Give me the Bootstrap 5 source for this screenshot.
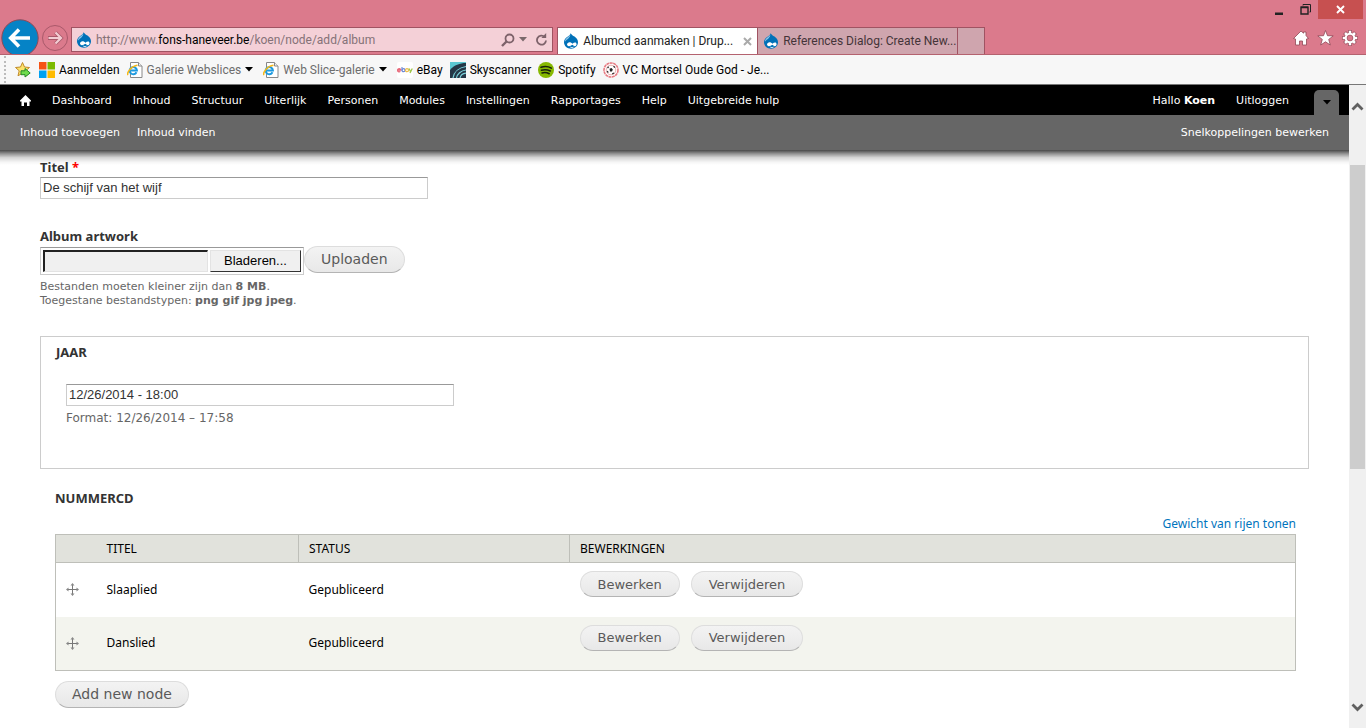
<!DOCTYPE html>
<html lang="nl">
<head>
<meta charset="utf-8">
<meta name="viewport" content="width=device-width, initial-scale=1">
<title>Albumcd aanmaken | Drupal</title>
<link rel="stylesheet" href="https://cdn.jsdelivr.net/npm/bootstrap@5.3.0/dist/css/bootstrap.min.css">
<style>
  body { font: 12px/14px "Noto Sans", "Open Sans", sans-serif; color: #000; background: #fff; }
  svg { display: block; flex-shrink: 0; }
  button { font: inherit; color: inherit; background: none; border: 0; padding: 0; }
  .ui-font { font-family: Roboto, "Open Sans", sans-serif; }

  /* browser frame */
  .frame { background: #db7a8c; border-bottom: 1px solid #b4626f; }
  .title-strip { height: 27px; padding-right: 3px; }
  .title-strip button { height: 19px; width: 26px; display: flex; align-items: center; justify-content: center; }
  .title-strip .close-window { width: 45px; background: #c75050; }
  .nav-row { height: 27px; }
  .address { width: 35.3%; height: 25px; background: #f4d0d7; border: 1px solid #a05362; margin: 0 4px 2px 3px; padding: 0 4px; }
  .url { color: #857278; }
  .url b { color: #000; font-weight: 400; }
  .page-tab { width: 200px; height: 27px; padding: 0 5px; border: 1px solid #a05362; border-bottom: 0; border-left: 0; background: #cfa5ae; color: #443438; }
  .page-tab.current { background: #fff; color: #222; border-left: 1px solid #a05362; width: 201px; }
  .page-tab.blank { width: 27px; }
  .tools { padding-right: 8px; }

  .favorites { height: 30px; background: #f7f7f7; border-bottom: 1px solid #777; padding-left: 4px; }
  .favorites a { color: #000; text-decoration: none; display: flex; align-items: center; gap: 4px; margin-right: 7px; white-space: nowrap; }
  .favorites a.feed { color: #6d6d6d; margin-right: 10px; }
  .grip { height: 27px; border-left: 2px dotted #bbb; }

  /* scrollbar */
  .scroll-rail { width: 17px; background: #f0f0f0; padding: 13px 1px; }
  .scroll-thumb { height: 304px; background: #cdcdcd; margin-top: 50px; }

  /* admin toolbar */
  .admin { font: 11px/20px "DejaVu Sans", Verdana, sans-serif; position: relative; }
  .admin a { color: #fff; text-decoration: none; }
  .menu-bar { background: #000; height: 30px; padding: 1px 10px 0 20px; gap: 21px; }
  .menu-toggle { background: #666; width: 25px; height: 25px; border-radius: 5px 5px 0 0; margin-left: 4px; }
  .shortcut-bar { background: #666; height: 35px; padding: 0 20px; gap: 17px; }
  .admin::after { content: ""; position: absolute; left: 0; right: 0; top: 100%; height: 15px; pointer-events: none;
    background: linear-gradient(#000000b8, #0000006c 25%, #0000002c 50%, #0000000a 80%, #0000); }

  /* form */
  .node-form { padding: 8px 40px 0; }
  .field-title { font-size: 13px; line-height: 18px; font-weight: 700; color: #333; margin: 0 0 1px; display: block; }
  .req { color: #f00; }
  .text-field { display: block; width: 388px; max-width: 100%; height: 22px; padding: 0 2px 1px; border: 1px solid #ccc; border-top-color: #999; color: #333; font: 13px/18px "Liberation Sans", Arial, sans-serif; background: #fff; }
  .hint { color: #666; font-family: "DejaVu Sans", Verdana, sans-serif; font-size: 11px; margin-top: 5px; }
  .hint.wide { font-size: 12px; }
  .file-box { border: 1px solid #ccc; border-top-color: #999; padding: 2px; height: 28px; gap: 2px; margin-top: 1px; font: 13px/18px "Liberation Sans", Arial, sans-serif; }
  .file-box input { width: 165px; height: 22px; background: #f0f0f0; border: 1px solid #e3e3e3; border-top: 2px solid #222; border-left: 2px solid #222; }
  .file-box button { width: 91px; height: 22px; background: #f0f0f0; color: #000; border: 1px solid #e3e3e3; border-right-color: #333; border-bottom-color: #333; }
  .pill { font: 13px/17px "DejaVu Sans", Verdana, sans-serif; color: #5a5a5a; height: 26px; padding: 0 17px; border: 1px solid #ddd; border-bottom-color: #b4b4b4; border-radius: 14px; background: linear-gradient(#f3f3f3, #e8e8e8); }
  .pill-lg { font-size: 14px; height: 27px; padding: 0 16px; }
  .row-actions { gap: 11px; }
  .date-box { border: 1px solid #ccc; padding: 6px 15px 43px; margin-top: 28px; }
  .date-inner { padding: 22px 10px 0; }
  .node-set { padding: 20px 13px 0 15px; }
  .weights-line { margin-top: 10px; }
  .weights { color: #0074bd; text-decoration: none; }
  .nodes { width: 100%; border: 1px solid #bebfb9; table-layout: fixed; border-collapse: collapse; margin: 3px 0 10px; }
  .nodes th { background: #e1e2dc; border-bottom: 1px solid #bebfb9; font-weight: 400; height: 28px; padding: 0 10px; }
  .nodes th + th + th { border-left: 1px solid #bebfb9; }
  .nodes td { height: 54px; padding: 0 10px; vertical-align: middle; }
  .nodes td:last-child { vertical-align: top; padding-top: 8px; }
  .nodes tbody tr:nth-child(even) { background: #f3f4ee; }
  .c-drag { width: 41px; } .c-title { width: 202px; } .c-state { width: 271px; }
</style>
</head>
<body>
<svg width="0" height="0" class="position-absolute" aria-hidden="true">
  <symbol id="drop" viewBox="0 0 16 16">
    <path d="M7.6.3C8.6 2 10 2.700 11.500 3.600 13.600 5 15 7 15 9.300c0 3.700-3.100 6.400-6.900 6.400S1 12.900 1 9.200C1 6.800 2.500 5 4.500 3.700 6 2.800 7.300 2 7.600.3z" fill="#0071b8"/>
    <path d="M7.300 1.600C6.800 3.200 4.600 4 3.200 5.500 2 6.900 2 8 2.200 8.600 4 6.200 7.300 5 7.300 1.600z" fill="#8fc6e8"/>
    <path d="M4.500 10.300c2-1.800 3.600-.6 4.900.4 1.500-1.100 3.700-1.900 4.100.1.400 2-1.300 2.800-2.400 2.200L9.300 11.800c-1.400 1-2.700 1.900-4.100 1.300-1.300-.6-1.500-2-.7-2.800z" fill="#fff"/>
    <path d="M7.300 14.100c1 .6 2.300.6 3.200 0" stroke="#fff" stroke-width=".9" fill="none"/>
  </symbol>
  <symbol id="iepage" viewBox="0 0 16 16">
    <path d="M3.500.5h8l3.500 3.500v11.500H3.500z" fill="#fff" stroke="#888"/><path d="M11.500.5V4H15" fill="#eee" stroke="#888"/>
    <path d="M9.500 10.300A3.600 3.600 0 1 1 9.900 8.400H3.500" fill="none" stroke="#1c9ae0" stroke-width="2"/>
    <path d="M1 13C-.5 11 4 4 10.500 3.300" fill="none" stroke="#f5b818" stroke-width="1.500"/>
  </symbol>
  <symbol id="mover" viewBox="0 0 13 13">
    <path d="M6.500 1v11M1 6.500h11" stroke="#777" stroke-width="1"/>
    <path d="M6.500 0l2 2.500H4.500zM6.500 13l2-2.500H4.500zM0 6.500l2.500-2v4zM13 6.500l-2.500-2v4z" fill="#888"/>
  </symbol>
  <symbol id="caret" viewBox="0 0 8 5"><path d="M0 0h8L4 4.500z" fill="currentColor"/></symbol>
</svg>

<div class="d-flex flex-column vh-100 overflow-hidden">
  <header class="ui-font">
    <div class="frame">
      <div class="title-strip d-flex justify-content-end">
        <button aria-label="Minimaliseren"><svg width="10" height="12"><path d="M1 8.500h8v2.500h-8z" fill="#222"/></svg></button>
        <button aria-label="Herstellen"><svg width="11" height="11"><path d="M3 1.500V.5h7.500V8h-1" fill="none" stroke="#222"/><path d="M1 3.500h7V10H1zM.5 3h8" fill="none" stroke="#222" stroke-width="1.400"/></svg></button>
        <button class="close-window" aria-label="Sluiten"><svg width="9" height="9"><path d="M1 1l7 7M8 1L1 8" stroke="#fff" stroke-width="1.900"/></svg></button>
      </div>
      <div class="nav-row d-flex align-items-end">
        <button aria-label="Terug"><svg width="40" height="35"><circle cx="20" cy="19" r="18.200" fill="#0583c6" stroke="#8f4957"/><path d="M30 19H12M19 10.500L10.700 19l8.300 8.500" fill="none" stroke="#fff" stroke-width="3.600"/></svg></button>
        <button aria-label="Vooruit"><svg width="28" height="29"><circle cx="15" cy="13" r="12.500" fill="none" stroke="#a9596a"/><path d="M8 13h13M15.500 7.500L21 13l-5.500 5.500" fill="none" stroke="#a9596a" stroke-width="3.800"/><path d="M8.500 13H20.500M15.500 7.500L21 13l-5.500 5.500" fill="none" stroke="#f3ccd3" stroke-width="2.200"/></svg></button>
        <div class="address d-flex align-items-center">
          <svg width="16" height="16"><use href="#drop"/></svg>
          <a class="url flex-grow-1 ms-1 text-decoration-none" href="#">http://www.<b>fons-haneveer.be</b>/koen/node/add/album</a>
          <button aria-label="Zoeken"><svg width="14" height="14"><circle cx="8.500" cy="5.500" r="4" fill="none" stroke="#7d626a" stroke-width="1.800"/><path d="M5.500 8.500L1 13" stroke="#7d626a" stroke-width="2.400"/></svg></button>
          <button class="ms-1 text-black-50" aria-label="Geschiedenis"><svg width="8" height="5"><use href="#caret"/></svg></button>
          <button class="ms-2" aria-label="Vernieuwen"><svg width="13" height="13"><path d="M9.700 4A4.500 4.500 0 1 0 11 7.500" fill="none" stroke="#7d626a" stroke-width="1.800"/><path d="M11.200 0v5H6.400z" fill="#7d626a"/></svg></button>
        </div>
        <button class="page-tab current d-flex align-items-center"><svg width="16" height="16"><use href="#drop"/></svg><span class="ms-1 text-nowrap">Albumcd aanmaken | Drup...</span><svg class="ms-auto" width="9" height="9"><path d="M1 1l7 7M8 1L1 8" stroke="#aaa" stroke-width="2"/></svg></button>
        <button class="page-tab d-flex align-items-center"><svg width="16" height="16"><use href="#drop"/></svg><span class="ms-1 text-nowrap">References Dialog: Create New...</span></button>
        <button class="page-tab blank" aria-label="Nieuw tabblad"></button>
        <div class="tools d-flex ms-auto gap-2 mb-2">
          <button aria-label="Startpagina"><svg width="16" height="16" viewBox="0 0 16 16"><path d="M8 1l2.500 2.200V2H13v3.500L15.500 8.500 13.500 9v6H9.500v-4h-3v4h-4V9L.5 8.500z" fill="#fff" stroke="#8f4957" stroke-width=".8"/></svg></button>
          <button aria-label="Favorieten"><svg width="17" height="16" viewBox="0 0 17 16"><path d="M8.500.5l2 5.200 5.700.2-4.500 3.500 1.600 5.600-4.800-3.200L3.700 15l1.600-5.600L.8 5.900l5.700-.2z" fill="#fff" stroke="#8f4957" stroke-width=".8"/></svg></button>
          <button aria-label="Extra"><svg width="16" height="16" viewBox="0 0 16 16"><g stroke="#8f4957" stroke-width="4"><path d="M8 .3v15.400M.3 8h15.400M2.600 2.600l10.800 10.800M13.400 2.600L2.600 13.400"/></g><g stroke="#fff" stroke-width="2.500"><path d="M8 .8v14.400M.8 8h14.400M3 3l10 10M13 3L3 13"/></g><circle cx="8" cy="8" r="4.200" fill="#db7a8c" stroke="#fff" stroke-width="2.200"/><circle cx="8" cy="8" r="2.900" fill="none" stroke="#8f4957" stroke-width=".6"/></svg></button>
        </div>
      </div>
    </div>
    <nav class="favorites d-flex align-items-center" aria-label="Favorieten">
      <span class="grip"></span>
      <button class="ms-2 me-2" aria-label="Toevoegen aan favorieten"><svg width="17" height="17"><path d="M8.500 1.500l2 4.500 5 .5-3.700 3.300 1 5-4.300-2.600L4 14.800l1.200-5L1.500 6.500l5-.5z" fill="#fce36a" stroke="#c08a2a"/><path d="M7 9.800h4V7.500L16.200 12 11 16v-2.300H7z" fill="#6fdc4c" stroke="#25892a"/></svg></button>
      <a href="#"><svg width="16" height="16"><path d="M0 0h7.500v7.500H0z" fill="#f65314"/><path d="M8.500 0H16v7.500H8.500z" fill="#7cbb00"/><path d="M0 8.500h7.500V16H0z" fill="#00a1f1"/><path d="M8.500 8.500H16V16H8.500z" fill="#ffbb00"/></svg>Aanmelden</a>
      <a class="feed" href="#"><svg width="16" height="16"><use href="#iepage"/></svg>Galerie Webslices<svg class="text-black" width="8" height="5"><use href="#caret"/></svg></a>
      <a class="feed" href="#"><svg width="16" height="16"><use href="#iepage"/></svg>Web Slice-galerie<svg class="text-black" width="8" height="5"><use href="#caret"/></svg></a>
      <a href="#"><svg width="16" height="16" fill="none" stroke-width="1.300"><rect width="16" height="16" rx="2" fill="#fff"/><path d="M.7 8h3A1.600 1.600 0 1 0 3.300 9.300" stroke="#e8697a"/><path d="M5 5v3.500" stroke="#8097d8"/><circle cx="6.500" cy="8.200" r="1.500" stroke="#6c88d8"/><circle cx="10" cy="8.200" r="1.500" stroke="#edbd4c"/><path d="M12 6.500l1.500 3M15.300 6.500L13 11" stroke="#9fc64a"/></svg>eBay</a>
      <a href="#"><svg width="16" height="16"><path d="M0 0h16v16H0z" fill="#5cc8d2"/><path d="M0 16V8C4 3 10 1 16 1v15z" fill="#253746"/><path d="M3 16C4 10 9 5.500 16 4.500M6.500 16C7 12 11 8.500 16 8M10 16c.5-2.500 3-4.500 6-4.800" fill="none" stroke="#7ad2da" stroke-width="1.200"/></svg>Skyscanner</a>
      <a href="#"><svg width="16" height="16"><circle cx="8" cy="8" r="8" fill="#86b800"/><path d="M3 5.300c3.500-1.200 7.500-.8 10.300.8M3.500 8.200c3-.9 6.200-.5 8.800.8M4 10.900c2.700-.7 5-.4 7.200.8" fill="none" stroke="#18220a" stroke-width="1.600" stroke-linecap="round"/></svg>Spotify</a>
      <a href="#"><svg width="16" height="16"><circle cx="8" cy="8" r="7" fill="#fff" stroke="#e77a82" stroke-width="1.600" stroke-dasharray="3 .5"/><circle cx="8" cy="8" r="4.800" fill="#fff" stroke="#d99" stroke-width=".8"/><path d="M6.500 6.800L8.500 6l1.300 1.500-.8 2H7z" fill="#222"/><path d="M4.500 6l1.200-1.200M10.500 4.300l1.500 1.200M4.200 9l1 1.700M9.200 11.800l2-.8" stroke="#333" stroke-width="1.300"/></svg>VC Mortsel Oude God - Je...</a>
    </nav>
  </header>

  <div class="d-flex flex-grow-1 overflow-hidden">
    <div class="flex-grow-1 overflow-hidden">
      <div class="admin">
        <nav class="menu-bar d-flex align-items-center" aria-label="Beheer">
          <a href="#" aria-label="Home"><svg width="11" height="11"><path d="M5.500 0L11 5.500V6.500H9.500V11H7V7.500H4V11H1.500V6.500H0v-1z" fill="#fff"/></svg></a>
          <a href="#">Dashboard</a><a href="#">Inhoud</a><a href="#">Structuur</a><a href="#">Uiterlijk</a><a href="#">Personen</a><a href="#">Modules</a><a href="#">Instellingen</a><a href="#">Rapportages</a><a href="#">Help</a><a href="#">Uitgebreide hulp</a>
          <a class="ms-auto" href="#">Hallo <strong>Koen</strong></a><a href="#">Uitloggen</a>
          <button class="menu-toggle d-flex align-items-center justify-content-center align-self-end text-black" aria-label="Snelkoppelingen"><svg width="8" height="5"><use href="#caret"/></svg></button>
        </nav>
        <nav class="shortcut-bar d-flex align-items-center" aria-label="Snelkoppelingen">
          <a href="#">Inhoud toevoegen</a><a href="#">Inhoud vinden</a><a class="ms-auto" href="#">Snelkoppelingen bewerken</a>
        </nav>
      </div>

      <form class="node-form" onsubmit="return false">
        <label class="field-title" for="titel">Titel <span class="req">*</span></label>
        <input class="text-field" id="titel" type="text" value="De schijf van het wijf">

        <label class="field-title mt-4 pt-1" for="artwork">Album artwork</label>
        <div class="d-flex align-items-start">
          <div class="file-box d-flex align-items-center"><input id="artwork" type="text" readonly><button type="button">Bladeren...</button></div>
          <button class="pill pill-lg" type="button">Uploaden</button>
        </div>
        <div class="hint">Bestanden moeten kleiner zijn dan <strong>8 MB</strong>.<br>Toegestane bestandstypen: <strong>png gif jpg jpeg</strong>.</div>

        <fieldset class="date-box">
          <label class="field-title" for="jaar">JAAR</label>
          <div class="date-inner">
            <input class="text-field" id="jaar" type="text" value="12/26/2014 - 18:00">
            <div class="hint wide">Format: 12/26/2014 – 17:58</div>
          </div>
        </fieldset>

        <section class="node-set">
          <h2 class="field-title">NUMMERCD</h2>
          <div class="weights-line text-end"><a class="weights" href="#">Gewicht van rijen tonen</a></div>
          <table class="nodes">
            <colgroup><col class="c-drag"><col class="c-title"><col class="c-state"><col></colgroup>
            <thead><tr><th></th><th>TITEL</th><th>STATUS</th><th>BEWERKINGEN</th></tr></thead>
            <tbody>
              <tr><td><a href="#" aria-label="Verslepen"><svg width="13" height="13"><use href="#mover"/></svg></a></td><td>Slaaplied</td><td>Gepubliceerd</td><td><div class="row-actions d-flex"><button class="pill" type="button">Bewerken</button><button class="pill" type="button">Verwijderen</button></div></td></tr>
              <tr><td><a href="#" aria-label="Verslepen"><svg width="13" height="13"><use href="#mover"/></svg></a></td><td>Danslied</td><td>Gepubliceerd</td><td><div class="row-actions d-flex"><button class="pill" type="button">Bewerken</button><button class="pill" type="button">Verwijderen</button></div></td></tr>
            </tbody>
          </table>
          <button class="pill pill-lg" type="button">Add new node</button>
        </section>
      </form>
    </div>
    <div class="scroll-rail d-flex flex-column flex-shrink-0" aria-hidden="true">
      <svg width="15" height="17"><path d="M2.500 11.500l5-5 5 5" fill="none" stroke="#606060" stroke-width="2.800"/></svg>
      <div class="scroll-thumb"></div>
      <svg class="mt-auto" width="15" height="17"><path d="M2.500 6.500l5 5 5-5" fill="none" stroke="#606060" stroke-width="2.800"/></svg>
    </div>
  </div>
</div>
<script src="https://cdn.jsdelivr.net/npm/bootstrap@5.3.0/dist/js/bootstrap.bundle.min.js"></script>
</body>
</html>
